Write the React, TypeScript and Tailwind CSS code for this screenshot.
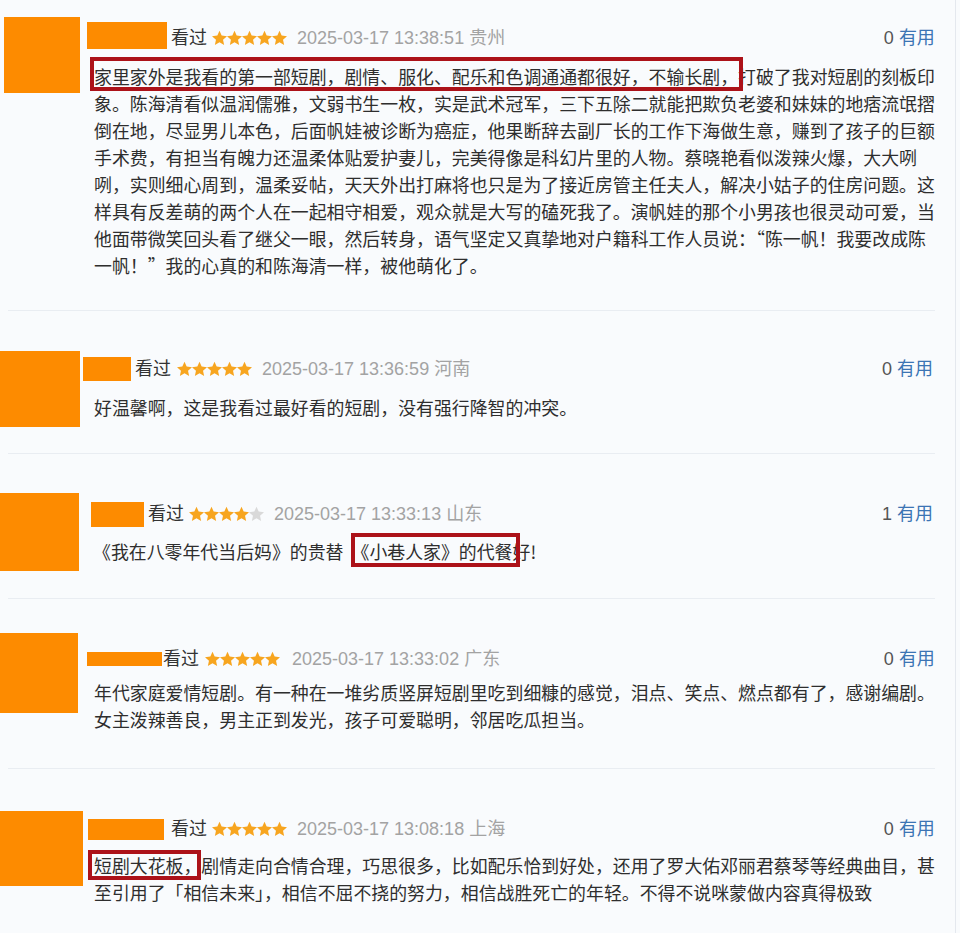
import React from "react";

const starPoints = (cx: number, cy: number) => {
  const pts: string[] = [];
  for (let i = 0; i < 10; i++) {
    const a = ((-90 + 36 * i) * Math.PI) / 180;
    const r = i % 2 === 0 ? 7.9 : 3.7;
    pts.push(`${(cx + r * Math.cos(a)).toFixed(2)},${(cy + r * Math.sin(a)).toFixed(2)}`);
  }
  return pts.join(" ");
};

const Stars = ({ n }: { n: number }) => (
  <svg width="75" height="16" viewBox="0 0 75 16" className="shrink-0">
    {[0, 1, 2, 3, 4].map((i) => (
      <polygon key={i} points={starPoints(7.5 + i * 15, 8.6)} fill={i < n ? "#f7a51f" : "#d9d9d9"} />
    ))}
  </svg>
);

const head = "font-['Liberation_Sans','Noto_Sans_CJK_SC',sans-serif] text-[18px]";
const body =
  "font-['Noto_Sans_CJK_SC','Liberation_Sans',sans-serif] text-[17.9px] leading-[27px] text-[#2e2e2e] whitespace-nowrap";

const Useful = ({ n }: { n: number }) => (
  <div className={`ml-auto flex items-center whitespace-nowrap ${head}`}>
    <span className="text-[#555555]">{n}</span>
    <span className="ml-[5px] text-[#3c74b4]">有用</span>
  </div>
);

const Divider = () => <div className="ml-[8px] w-[927px] h-px bg-[#e9edf2]" />;

export default function App() {
  return (
    <div className="w-[960px] h-[933px] overflow-hidden bg-[#f9fbfd]">
      <div className="w-[956px] h-[933px] border-r border-[#e4e8ee]">
        {/* Card 1 */}
        <section className="h-[310px] flex">
          <div className="ml-[4px] mt-[17px] w-[76px] h-[76px] bg-[#fd8b00] shrink-0" />
          <div className="ml-[7px] mt-[22px] flex-1 pr-[22px]">
            <div className={`flex items-center h-[32px] ${head}`}>
              <div className="w-[80px] h-[27px] bg-[#fd8b00] shrink-0 self-start" />
              <span className="ml-[4px] text-[#333333]">看过</span>
              <span className="ml-[5px] flex"><Stars n={5} /></span>
              <span className="ml-[10px] text-[#a3a3a3] whitespace-nowrap">2025-03-17 13:38:51 贵州</span>
              <Useful n={0} />
            </div>
            <div className={`relative ml-[7px] mt-[9px] ${body}`}>
              <div className="absolute left-[-4px] top-[-6px] w-[653px] h-[34px] border-[4px] border-[#ac1219]" />
              <div>家里家外是我看的第一部短剧，剧情、服化、配乐和色调通通都很好，不输长剧，打破了我对短剧的刻板印</div>
              <div>象。陈海清看似温润儒雅，文弱书生一枚，实是武术冠军，三下五除二就能把欺负老婆和妹妹的地痞流氓摺</div>
              <div>倒在地，尽显男儿本色，后面帆娃被诊断为癌症，他果断辞去副厂长的工作下海做生意，赚到了孩子的巨额</div>
              <div>手术费，有担当有魄力还温柔体贴爱护妻儿，完美得像是科幻片里的人物。蔡晓艳看似泼辣火爆，大大咧</div>
              <div>咧，实则细心周到，温柔妥帖，天天外出打麻将也只是为了接近房管主任夫人，解决小姑子的住房问题。这</div>
              <div>样具有反差萌的两个人在一起相守相爱，观众就是大写的磕死我了。演帆娃的那个小男孩也很灵动可爱，当</div>
              <div>他面带微笑回头看了继父一眼，然后转身，语气坚定又真挚地对户籍科工作人员说：“陈一帆！我要改成陈</div>
              <div>一帆！”我的心真的和陈海清一样，被他萌化了。</div>
            </div>
          </div>
        </section>
        <Divider />

        {/* Card 2 */}
        <section className="h-[142px] flex">
          <div className="mt-[40px] w-[80px] h-[76px] bg-[#fd8b00] shrink-0" />
          <div className="ml-[3px] mt-[45px] flex-1 pr-[22px]">
            <div className={`flex items-center h-[26px] ${head}`}>
              <div className="w-[48px] h-[24px] bg-[#fd8b00] shrink-0" />
              <span className="ml-[4px] text-[#333333]">看过</span>
              <span className="ml-[6px] flex"><Stars n={5} /></span>
              <span className="ml-[10px] text-[#a3a3a3] whitespace-nowrap">2025-03-17 13:36:59 河南</span>
              <Useful n={0} />
            </div>
            <div className={`ml-[11px] mt-[12px] ${body}`}>
              <div>好温馨啊，这是我看过最好看的短剧，没有强行降智的冲突。</div>
            </div>
          </div>
        </section>
        <Divider />

        {/* Card 3 */}
        <section className="h-[144px] flex">
          <div className="mt-[39px] w-[79px] h-[78px] bg-[#fd8b00] shrink-0" />
          <div className="ml-[12px] mt-[47px] flex-1 pr-[22px]">
            <div className={`flex items-center h-[26px] ${head}`}>
              <div className="w-[53px] h-[25px] bg-[#fd8b00] shrink-0" />
              <span className="ml-[4px] text-[#333333]">看过</span>
              <span className="ml-[5px] flex"><Stars n={4} /></span>
              <span className="ml-[10px] text-[#a3a3a3] whitespace-nowrap">2025-03-17 13:33:13 山东</span>
              <Useful n={1} />
            </div>
            <div className={`relative ml-[2px] mt-[11px] ${body}`}>
              <div className="absolute left-[258px] top-[-5px] w-[169px] h-[34px] border-[4px] border-[#ac1219]" />
              <div>
                《我在八零年代当后妈》的贵替<span className="ml-[8px]">《小巷人家》的代餐好!</span>
              </div>
            </div>
          </div>
        </section>
        <Divider />

        {/* Card 4 */}
        <section className="h-[169px] flex">
          <div className="mt-[34px] w-[78px] h-[80px] bg-[#fd8b00] shrink-0" />
          <div className="ml-[9px] mt-[47px] flex-1 pr-[22px]">
            <div className={`flex items-center h-[26px] ${head}`}>
              <div className="w-[75px] h-[14px] bg-[#fd8b00] shrink-0" />
              <span className="ml-[1px] text-[#333333]">看过</span>
              <span className="ml-[6px] flex"><Stars n={5} /></span>
              <span className="ml-[12px] text-[#a3a3a3] whitespace-nowrap">2025-03-17 13:33:02 广东</span>
              <Useful n={0} />
            </div>
            <div className={`ml-[7px] mt-[7px] ${body} leading-[26px]`}>
              <div>年代家庭爱情短剧。有一种在一堆劣质竖屏短剧里吃到细糠的感觉，泪点、笑点、燃点都有了，感谢编剧。</div>
              <div>女主泼辣善良，男主正到发光，孩子可爱聪明，邻居吃瓜担当。</div>
            </div>
          </div>
        </section>
        <Divider />

        {/* Card 5 */}
        <section className="h-[164px] flex">
          <div className="mt-[42px] w-[83px] h-[75px] bg-[#fd8b00] shrink-0" />
          <div className="ml-[5px] mt-[47px] flex-1 pr-[22px]">
            <div className={`flex items-center h-[26px] ${head}`}>
              <div className="w-[76px] h-[21px] bg-[#fd8b00] shrink-0" />
              <span className="ml-[7px] text-[#333333]">看过</span>
              <span className="ml-[5px] flex"><Stars n={5} /></span>
              <span className="ml-[10px] text-[#a3a3a3] whitespace-nowrap">2025-03-17 13:08:18 上海</span>
              <Useful n={0} />
            </div>
            <div className={`relative ml-[6px] mt-[10px] ${body} leading-[26px]`}>
              <div className="absolute left-[-6px] top-[-2px] w-[113px] h-[30px] border-[4px] border-[#ac1219]" />
              <div>短剧大花板，剧情走向合情合理，巧思很多，比如配乐恰到好处，还用了罗大佑邓丽君蔡琴等经典曲目，甚</div>
              <div>至引用了「相信未来」，相信不屈不挠的努力，相信战胜死亡的年轻。不得不说咪蒙做内容真得极致</div>
            </div>
          </div>
        </section>
      </div>
    </div>
  );
}
